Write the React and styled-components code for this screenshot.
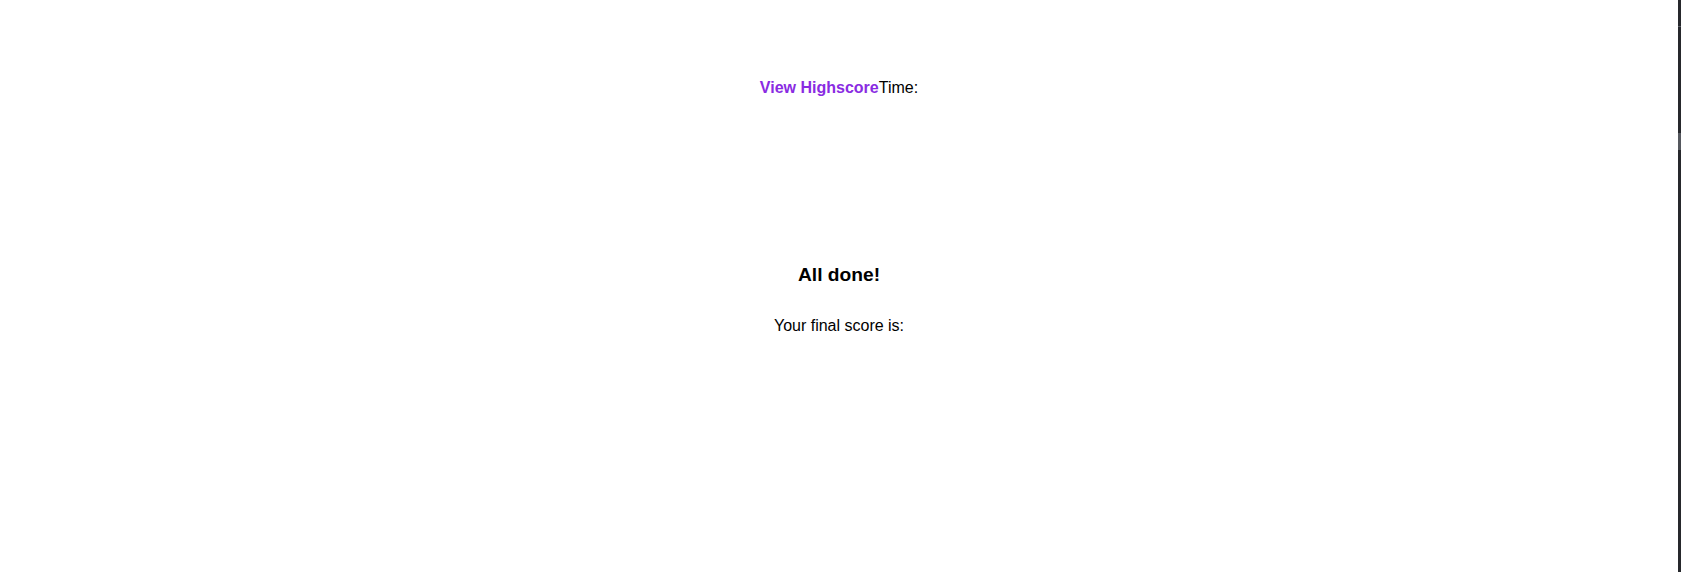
import styled, { createGlobalStyle } from "styled-components"

const GlobalStyle = createGlobalStyle`
  html, body {
    margin: 0;
    padding: 0;
    background: #ffffff;
  }
  body {
    font-family: "Liberation Sans", Arial, sans-serif;
    color: #000;
  }
`

const App = () => {
  return (
    <Page>
      <GlobalStyle />
      <Content>
        <Header>
          <HighscoreLink href="#">View Highscore</HighscoreLink>
          <Timer>Time:</Timer>
        </Header>
        <Done>
          <Title>All done!</Title>
          <Score>Your final score is:</Score>
        </Done>
      </Content>
      <Edge>
        <EdgeLine />
        <EdgeThumb />
      </Edge>
    </Page>
  )
}

export default App

const Page = styled.div`
  display: flex;
  height: 572px;
  overflow: hidden;
`

const Content = styled.main`
  flex: 1;
  display: flex;
  flex-direction: column;
  align-items: center;
`

const Header = styled.header`
  display: flex;
  justify-content: center;
  padding-top: 79px;
  font-size: 16px;
`

const HighscoreLink = styled.a`
  color: #8a2be2;
  font-weight: bold;
  text-decoration: none;
`

const Timer = styled.span`
  color: #000;
`

const Done = styled.section`
  display: flex;
  flex-direction: column;
  align-items: center;
  margin-top: 167px;
`

const Title = styled.h3`
  margin: 0;
  font-size: 19.2px;
  font-weight: bold;
`

const Score = styled.p`
  margin: 31px 0 0;
  font-size: 16px;
`

const Edge = styled.div`
  width: 3px;
  background: #26282c;
  display: flex;
  flex-direction: column;
`

const EdgeLine = styled.div`
  height: 1px;
  margin-top: 26px;
  background: #5a5d63;
`

const EdgeThumb = styled.div`
  height: 17px;
  margin-top: 106px;
  background: #55585e;
`
